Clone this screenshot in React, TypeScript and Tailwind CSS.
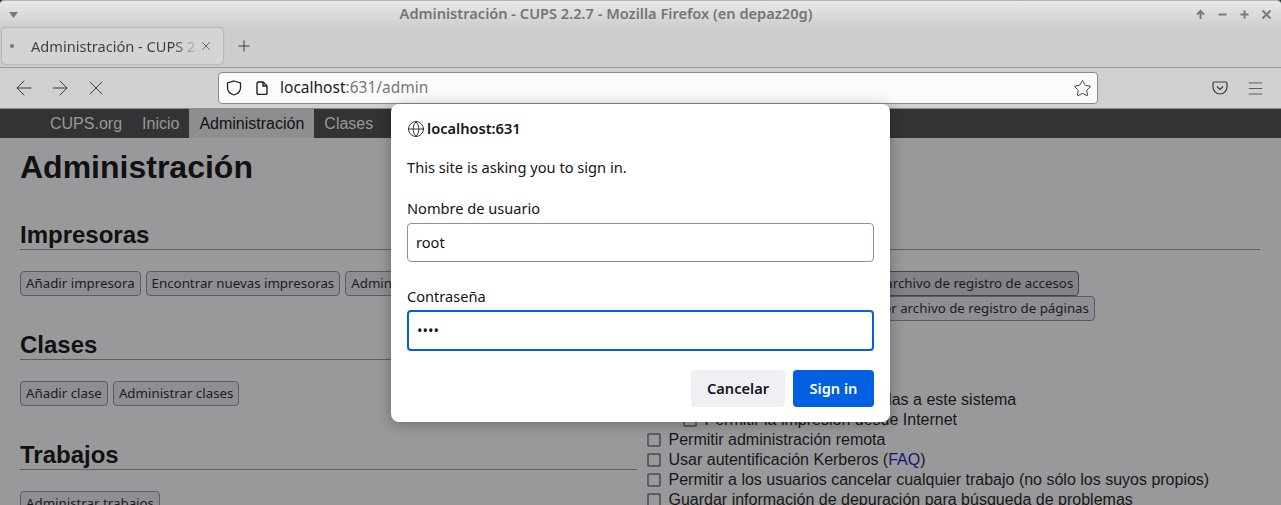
import React from 'react';
import { ArrowLeft, ArrowRight, Globe, Menu, Plus, Star, X } from 'lucide-react';

const sans = "font-['Noto_Sans',sans-serif]";

const PageButton = ({ label, hovered }: { label: string; hovered?: boolean }) => (
  <span
    className={`inline-block h-[25px] whitespace-nowrap rounded-[4px] border px-[5px] text-[13.3px] leading-[23px] text-[#1c1b20] ${
      hovered ? 'border-[#47464e] bg-[#838288]' : 'border-[#5d5c64] bg-[#8f8e94]'
    }`}
  >
    {label}
  </span>
);

const Section = ({ title, buttons }: { title: string; buttons: string[] }) => (
  <section className="h-[110px]">
    <h2 className="h-[29px] border-b border-[#5f5e63] text-[24px] leading-[28px] font-bold text-[#111]">{title}</h2>
    <div className={`mt-[21px] flex flex-wrap gap-x-[5px] gap-y-0 ${sans}`}>
      {buttons.map((b) => (
        <PageButton key={b} label={b} />
      ))}
    </div>
  </section>
);

const Check = ({ children, indent }: { children: React.ReactNode; indent?: boolean }) => (
  <label className={`flex h-[20px] items-center gap-[7.5px] whitespace-nowrap text-[16px] leading-[20px] text-[#171717] ${indent ? 'pl-[39px]' : 'pl-[3px]'}`}>
    <input type="checkbox" className="h-[14px] w-[14px] appearance-none rounded-[2px] border-2 border-[#5d5c64]" readOnly />
    {children}
  </label>
);

const WindowControls = () => (
  <div className="flex items-center gap-[9px] text-[#7a7a7a]">
    <svg width="13" height="13" viewBox="0 0 13 13" fill="none" stroke="currentColor" strokeWidth="2">
      <path d="M6.5 11V3M3 6.5l3.5-3.5L10 6.5" />
    </svg>
    <svg width="13" height="13" viewBox="0 0 13 13" fill="none" stroke="currentColor" strokeWidth="2">
      <path d="M2.5 6.5h8" />
    </svg>
    <svg width="13" height="13" viewBox="0 0 13 13" fill="none" stroke="currentColor" strokeWidth="2">
      <path d="M2.5 6.5h8M6.5 2.5v8" />
    </svg>
    <svg width="13" height="13" viewBox="0 0 13 13" fill="none" stroke="currentColor" strokeWidth="2">
      <path d="M2.5 2.5l8 8M10.5 2.5l-8 8" />
    </svg>
  </div>
);

const LoginDialog = () => (
  <div className={`absolute top-[104px] left-[391px] h-[318px] w-[499px] rounded-[8px] bg-white px-4 pt-[16px] text-[#15141a] shadow-[0_2px_14px_rgba(0,0,0,0.3)] ${sans}`}>
    <div className="flex h-[18px] items-center gap-[2px] text-[14.6px] font-semibold">
      <Globe size={18} strokeWidth={1.1} className="text-[#15141a]" />
      localhost:631
    </div>
    <p className="mt-[19px] h-[20px] text-[14.65px] leading-[20px]">This site is asking you to sign in.</p>
    <p className="mt-[21px] h-[20px] text-[14.6px] leading-[20px]">Nombre de usuario</p>
    <div className="mt-[5px] flex h-[39px] items-center rounded-[4px] border border-[#8f8f9d] px-2 text-[14.6px]">root</div>
    <p className="mt-[24px] h-[20px] text-[14.6px] leading-[20px]">Contraseña</p>
    <div className="mt-[4px] flex h-[41px] items-center rounded-[4px] border-2 border-[#0060df] px-2 text-[14.6px] leading-none">
      ••••
    </div>
    <div className="mt-[19px] flex justify-end gap-2">
      <span className="flex h-[37px] w-[94px] items-center justify-center rounded-[4px] bg-[#f0f0f4] text-[14.6px] font-semibold">Cancelar</span>
      <span className="flex h-[37px] w-[81px] items-center justify-center rounded-[4px] bg-[#0060df] text-[14.6px] font-semibold text-white">Sign in</span>
    </div>
  </div>
);

export default function App() {
  return (
    <div className="relative h-[505px] w-[1281px] overflow-hidden bg-[#0f3d3a] font-['Liberation_Sans',sans-serif]">
      <div className="flex h-full flex-col overflow-hidden rounded-t-[4px] border-t border-[#b5b5b5]">
        {/* title bar + tabs */}
        <div className={`h-[66px] shrink-0 bg-linear-to-b from-[#e9e9e9] from-0% via-[#cdcdcd] via-40% to-[#cdcdcd] ${sans}`}>
          <div className="flex h-[27px] items-center justify-between pr-[8px] pl-[9px]">
            <svg width="9" height="6" viewBox="0 0 9 6" className="text-[#777]">
              <path d="M0 0h9L4.500 6z" fill="currentColor" />
            </svg>
            <span className="mb-[2px] text-[14.6px] font-semibold text-[#757575]">Administración - CUPS 2.2.7 - Mozilla Firefox (en depaz20g)</span>
            <WindowControls />
          </div>
          <div className="flex items-center pl-[2px]">
            <div className="flex h-[36px] w-[221px] items-center rounded-[4px] bg-[#d4d4d4] shadow-[0_0_2px_rgba(0,0,0,0.35)]">
              <span className="ml-[8px] h-[4px] w-[4px] rounded-full bg-[#777]" />
              <span className="mt-[1px] ml-[17px] w-[168px] overflow-hidden bg-linear-to-r from-[#3c3c3c] from-85% to-transparent bg-clip-text text-[14.6px] whitespace-nowrap text-transparent">
                Administración - CUPS 2.2.7
              </span>
              <X size={14} strokeWidth={1.3} className="text-[#444]" />
            </div>
            <Plus size={18} strokeWidth={1.3} className="ml-[12px] text-[#3c3c3c]" />
          </div>
        </div>
        {/* toolbar */}
        <div className="flex h-[41px] shrink-0 items-center border-t border-[#9a9a9a] bg-[#d0d0d0] text-[#3c3c3c]">
          <ArrowLeft size={24} strokeWidth={1} className="ml-[12px]" />
          <ArrowRight size={24} strokeWidth={1} className="ml-[12px]" />
          <X size={24} strokeWidth={1} className="ml-[12px]" />
          <div className={`ml-[110px] flex h-[32px] w-[880px] items-center rounded-[4px] border border-[#8a8a8a] bg-[#fbfbfb] ${sans}`}>
            <svg width="16" height="16" viewBox="0 0 16 16" fill="none" stroke="currentColor" strokeWidth="1.3" className="ml-[7px] text-[#222]">
              <path d="M8 1l6.500 2v5c0 3.300-2.800 5.800-6.500 7-3.700-1.200-6.500-3.700-6.500-7V3z" />
            </svg>
            <svg width="14" height="14" viewBox="0 0 14 14" fill="none" stroke="currentColor" strokeWidth="1.4" className="ml-[13px] text-[#222]">
              <path d="M2 2.500A1.500 1.500 0 0 1 3.500 1H8l4 4v7a1.500 1.500 0 0 1-1.500 1.500h-7A1.500 1.500 0 0 1 2 12z" />
              <path d="M8 1v4h4" />
            </svg>
            <span className="ml-[11px] text-[15.5px]">
              <span className="text-[#222]">localhost</span>
              <span className="text-[#777]">:631/admin</span>
            </span>
            <Star size={19} strokeWidth={1.2} className="mr-[5px] ml-auto" />
          </div>
          <svg width="16" height="16" viewBox="0 0 16 16" fill="none" stroke="currentColor" strokeWidth="1.2" className="ml-[114px]">
            <path d="M2.500 2h11a1.500 1.500 0 0 1 1.500 1.500V7a7 7 0 0 1-14 0V3.500A1.500 1.500 0 0 1 2.500 2z" />
            <path d="M5 6.500l3 3 3-3" />
          </svg>
          <Menu size={19} strokeWidth={1} className="ml-[18px]" />
        </div>
        {/* cups page, dimmed behind the prompt */}
        <div className="flex min-h-0 flex-1 flex-col bg-[#99999b]">
          <nav className="flex h-[30px] shrink-0 items-center border-t border-[#8a8a8a] bg-[#333] pl-[40px] text-[16px] text-[#999]">
            {['CUPS.org', 'Inicio', 'Administración', 'Clases', 'Ayuda', 'Trabajos', 'Impresoras'].map((item) => (
              <a
                key={item}
                className={`flex h-full items-center px-[10px] ${item === 'Administración' ? 'bg-[#8e8e90] text-[#111]' : ''}`}
              >
                {item}
              </a>
            ))}
          </nav>
          <main className="px-5">
            <h1 className="mt-[11px] h-[36px] text-[32px] leading-[36px] font-bold text-[#111]">Administración</h1>
            <div className="mt-[36px] grid grid-cols-[617px_616px] gap-x-[7px]">
              <div>
                <Section title="Impresoras" buttons={['Añadir impresora', 'Encontrar nuevas impresoras', 'Administrar impresoras']} />
                <Section title="Clases" buttons={['Añadir clase', 'Administrar clases']} />
                <Section title="Trabajos" buttons={['Administrar trabajos']} />
              </div>
              <div>
                <h2 className="h-[29px] border-b border-[#5f5e63] text-[24px] leading-[28px] font-bold text-[#111]">Servidor</h2>
                <div className={`mt-[21px] flex flex-wrap gap-x-[5px] ${sans}`}>
                  <PageButton label="Editar archivo de configuración" />
                  <PageButton label="Ver archivo de registro de accesos" hovered />
                  <PageButton label="Ver archivo de registro de errores" />
                  <PageButton label="Ver archivo de registro de páginas" />
                </div>
                <p className="mt-[29px] h-[40px] text-[16px] font-bold text-[#171717]">Configuración del servidor:</p>
                <Check>Compartir impresoras conectadas a este sistema</Check>
                <Check indent>Permitir la impresión desde Internet</Check>
                <Check>Permitir administración remota</Check>
                <Check>
                  <span>
                    Usar autentificación Kerberos (<a className="text-[#16166e]">FAQ</a>)
                  </span>
                </Check>
                <Check>Permitir a los usuarios cancelar cualquier trabajo (no sólo los suyos propios)</Check>
                <Check>Guardar información de depuración para búsqueda de problemas</Check>
              </div>
            </div>
          </main>
        </div>
      </div>
      <LoginDialog />
    </div>
  );
}
